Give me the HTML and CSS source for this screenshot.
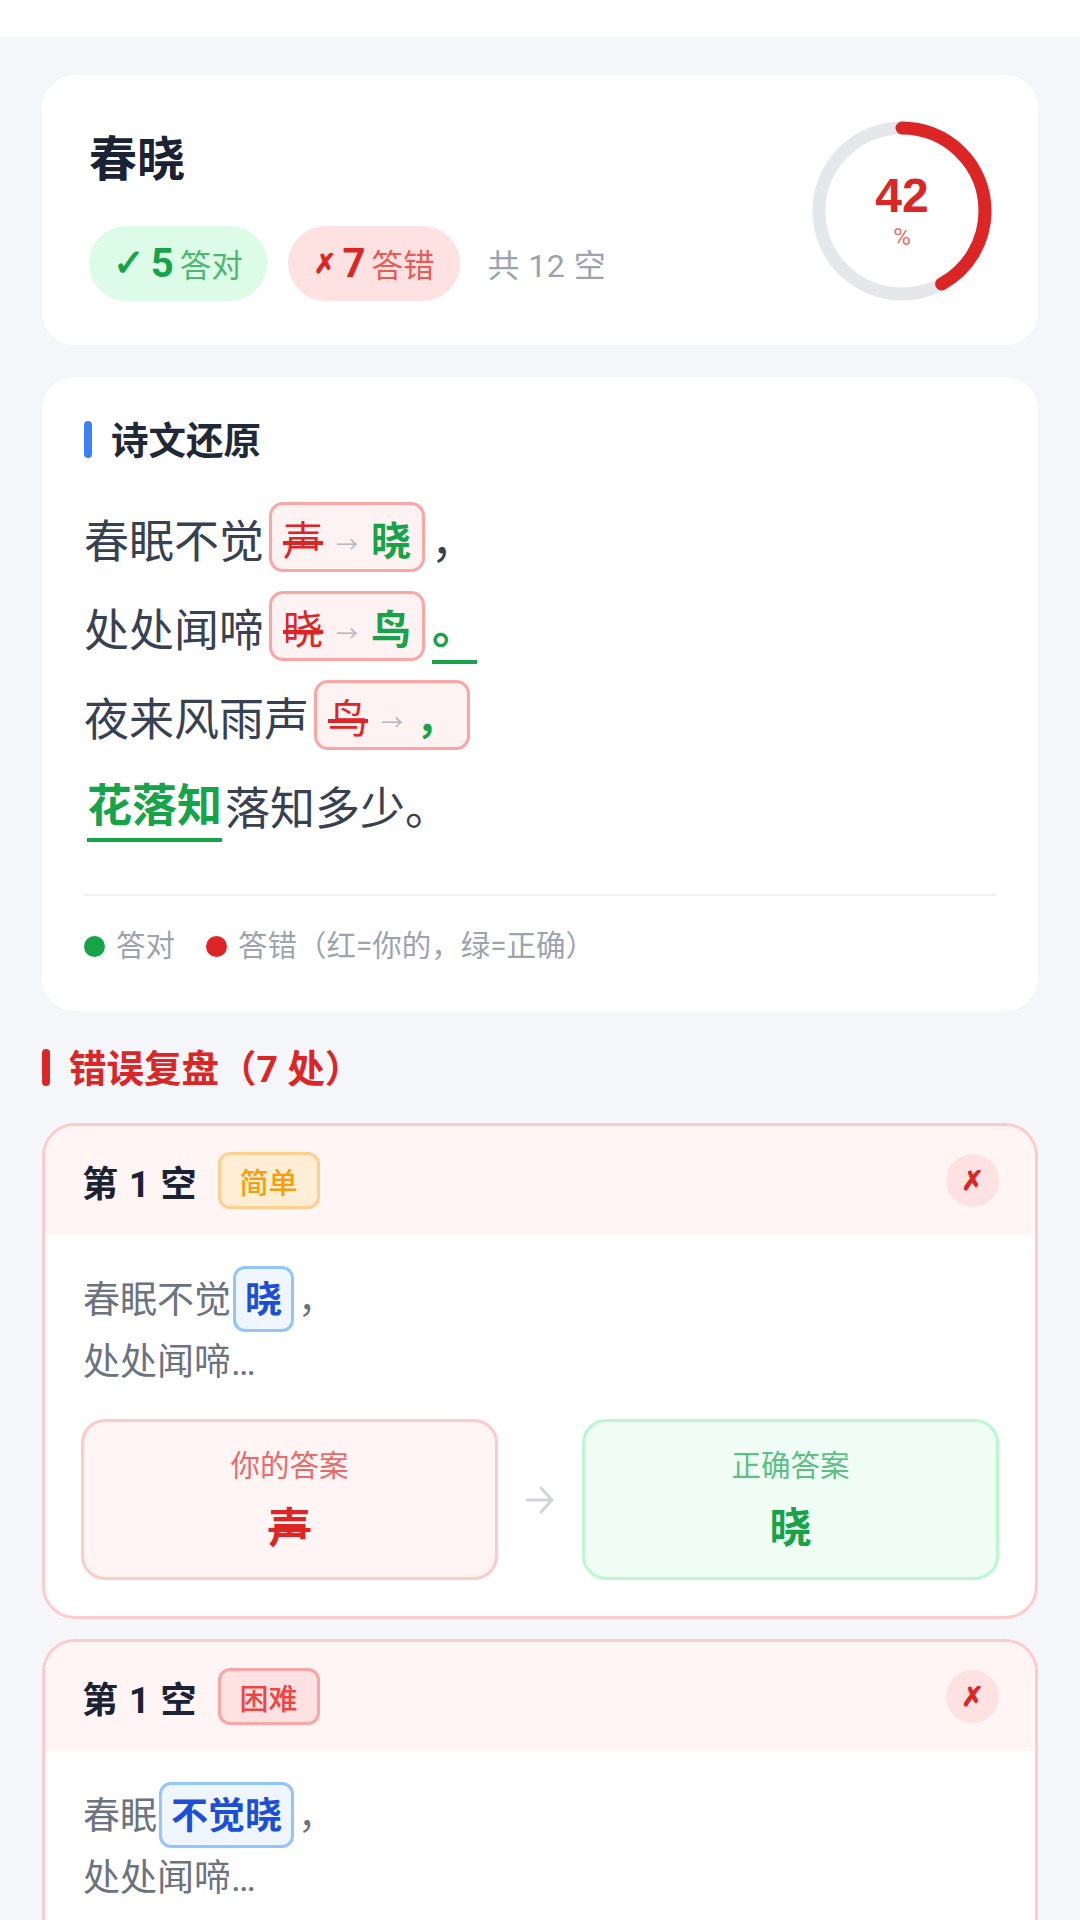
FILE: index.html
```html
<!DOCTYPE html>
<html lang="zh-CN">
<head>
    <meta charset="UTF-8">
    <meta name="viewport" content="width=device-width, initial-scale=1.0">
    <title>春晓</title>
    <link rel="stylesheet" href="styles.css">
</head>
<body>

<div class="topbar"></div>

<div class="page">
    <!-- Score summary -->
    <div class="card summary">
        <div class="summary-left">
            <h1 class="poem-title">春晓</h1>
            <div class="stats">
                <span class="pill pill-ok"><span class="pill-icon">✓</span><b>5</b><span class="pill-label">答对</span></span>
                <span class="pill pill-bad"><span class="pill-icon">✗</span><b>7</b><span class="pill-label">答错</span></span>
                <span class="total">共 12 空</span>
            </div>
        </div>
        <div class="ring">
            <svg width="180" height="180" viewBox="0 0 180 180">
                <circle cx="90" cy="90" r="83" fill="none" stroke="#e5e7eb" stroke-width="13"/>
                <circle cx="90" cy="90" r="83" fill="none" stroke="#dc2626" stroke-width="13" stroke-linecap="round"
                        stroke-dasharray="219 521.5" transform="rotate(-90 90 90)"/>
            </svg>
            <div class="ring-text">
                <span class="ring-num">42</span>
                <span class="ring-unit">%</span>
            </div>
        </div>
    </div>

    <!-- Restored poem -->
    <div class="card poem">
        <div class="section-head"><span class="section-bar"></span><span class="section-text">诗文还原</span></div>
        <div class="poem-lines">
            <div class="poem-line">春眠不觉<span class="fix"><s>声</s><i>→</i><b>晓</b></span>，</div>
            <div class="poem-line">处处闻啼<span class="fix"><s>晓</s><i>→</i><b>鸟</b></span><span class="right punct">。</span></div>
            <div class="poem-line">夜来风雨声<span class="fix"><s>鸟</s><i>→</i><b>，</b></span></div>
            <div class="poem-line"><span class="right">花落知</span>落知多少。</div>
        </div>
        <div class="legend">
            <span class="dot dot-ok"></span><span class="legend-ok">答对</span>
            <span class="dot dot-bad"></span><span>答错（红=你的，绿=正确）</span>
        </div>
    </div>

    <div class="section-head section-err"><span class="section-bar"></span><span class="section-text">错误复盘（7 处）</span></div>

    <!-- Wrong answers -->
    <div class="err-card">
        <div class="err-head">
            <span class="err-no">第 1 空</span>
            <span class="level level-easy">简单</span>
            <span class="err-mark">✗</span>
        </div>
        <div class="err-body">
            <div class="context">
                <div class="context-line">春眠不觉<span class="chip">晓</span>，</div>
                <div class="context-line">处处闻啼…</div>
            </div>
            <div class="answers">
                <div class="answer answer-bad">
                    <span class="answer-label">你的答案</span>
                    <s class="answer-value">声</s>
                </div>
                <svg class="answer-arrow" width="30" height="30" viewBox="0 0 30 30" fill="none" stroke="#d1d5db" stroke-width="3" stroke-linecap="round" stroke-linejoin="round">
                    <path d="M2 15H27M16 3L27 15L16 27"/>
                </svg>
                <div class="answer answer-ok">
                    <span class="answer-label">正确答案</span>
                    <b class="answer-value">晓</b>
                </div>
            </div>
        </div>
    </div>

    <div class="err-card">
        <div class="err-head">
            <span class="err-no">第 1 空</span>
            <span class="level level-hard">困难</span>
            <span class="err-mark">✗</span>
        </div>
        <div class="err-body">
            <div class="context">
                <div class="context-line">春眠<span class="chip">不觉晓</span>，</div>
                <div class="context-line">处处闻啼…</div>
            </div>
        </div>
    </div>
</div>

</body>
</html>
```

FILE: styles.css
```css
html, body {
    margin: 0;
    height: 1920px;
    overflow: hidden;
}
body {
    background-color: #f5f6fa;
    font-family: Roboto, "Noto Sans CJK SC", sans-serif;
    color: #1f2937;
}
.topbar {
    height: 37px;
    background-color: white;
}
.page {
    display: flex;
    flex-direction: column;
    padding: 38px 42px 0;
}
.card {
    background-color: white;
    border-radius: 33px;
}

/* Summary card */
.summary {
    height: 270px;
    display: flex;
    justify-content: space-between;
    align-items: center;
    padding: 0 46px 0 47px;
    box-sizing: border-box;
}
.summary-left {
    padding-top: 10px;
}
.poem-title {
    margin: 0 0 36px;
    font-size: 48px;
    line-height: 60px;
    font-weight: 700;
    color: #1a2233;
}
.stats {
    display: flex;
    align-items: center;
}
.pill {
    display: flex;
    align-items: center;
    height: 75px;
    border-radius: 38px;
    padding: 0 26px;
    font-size: 32px;
}
.pill b {
    font-size: 40px;
    font-weight: 700;
    margin: 0 6px;
}
.pill-label {
    font-size: 31.5px;
}
.pill-icon {
    font-family: "DejaVu Sans", sans-serif;
    font-weight: 700;
    -webkit-text-stroke: 1px currentColor;
}
.pill-ok {
    background-color: #dcfce7;
    color: #16a34a;
    padding: 0 24px;
    margin: 0 21px 0 0;
}
.pill-ok .pill-icon {
    font-size: 38px;
}
.pill-ok .pill-label {
    color: #4ab873;
}
.pill-bad {
    background-color: #fee2e2;
    color: #dc2626;
    margin-right: 27px;
}
.pill-bad .pill-icon {
    font-size: 27px;
}
.pill-bad .pill-label {
    color: #e85a5a;
}
.total {
    font-size: 32px;
    letter-spacing: 0.5px;
    color: #9ca3af;
}
.ring {
    position: relative;
    top: 1px;
    width: 180px;
    height: 180px;
}
.ring svg {
    display: block;
}
.ring-text {
    position: absolute;
    inset: 0;
    padding-top: 4px;
    display: flex;
    flex-direction: column;
    align-items: center;
    justify-content: center;
    color: #dc2626;
}
.ring-num {
    font-family: "Liberation Sans", sans-serif;
    font-size: 48px;
    line-height: 48px;
    font-weight: 700;
}
.ring-unit {
    font-size: 24px;
    line-height: 34px;
    color: #ef6b6b;
}

/* Poem card */
.poem {
    margin-top: 32px;
    height: 634px;
    padding: 44px 42px 0;
    box-sizing: border-box;
}
.section-head {
    display: flex;
    align-items: flex-start;
    font-size: 37.5px;
    line-height: 37px;
    font-weight: 700;
    color: #1f2937;
}
.section-text {
    margin-top: 2px;
}
.section-bar {
    width: 8px;
    height: 37px;
    border-radius: 4px;
    background-color: #3b82f6;
    margin-right: 19px;
}
.poem-lines {
    margin-top: 32px;
}
.poem-line {
    display: flex;
    align-items: center;
    height: 89px;
    box-sizing: border-box;
    padding-top: 4px;
    font-size: 45px;
    color: #374151;
}
.fix {
    display: flex;
    align-items: center;
    height: 70px;
    box-sizing: border-box;
    border: 3px solid #fca5a5;
    border-radius: 14px;
    background-color: #fef2f2;
    padding: 3px 11px 0;
    margin: -4px 6px 0 5px;
    font-size: 40px;
}
.fix s {
    color: #dc2626;
}
.fix i {
    font-style: normal;
    font-size: 22px;
    color: #b4b8c0;
    margin: 8px 13px 0;
}
.fix b {
    color: #16a34a;
    font-weight: 700;
}
.right {
    color: #16a34a;
    font-weight: 700;
    border-bottom: 4px solid #16a34a;
    line-height: 63px;
    margin: 6px 3px 0;
}
.punct {
    margin-left: 1px;
}
.legend {
    margin-top: 46px;
    border-top: 2px solid #eff0f4;
    padding-top: 28px;
    display: flex;
    align-items: center;
    font-size: 29.5px;
    line-height: 44px;
    color: #9ca3af;
}
.dot {
    width: 21px;
    height: 21px;
    border-radius: 50%;
    margin-right: 11px;
}
.dot-ok {
    background-color: #16a34a;
}
.dot-bad {
    background-color: #dc2626;
}
.legend-ok {
    margin-right: 31px;
}

/* Wrong answer cards */
.section-err {
    margin-top: 38px;
    color: #dc2626;
}
.section-err .section-bar {
    background-color: #dc2626;
}
.err-card {
    margin-top: 20px;
    height: 496px;
    box-sizing: border-box;
    border: 3px solid #fecaca;
    border-radius: 33px;
    background-color: white;
    overflow: hidden;
    flex-shrink: 0;
}
.section-err + .err-card {
    margin-top: 35px;
}
.err-head {
    height: 109px;
    display: flex;
    align-items: center;
    background-color: #fff5f5;
    padding: 0 36px 0 37px;
}
.err-no {
    font-size: 36px;
    font-weight: 700;
    color: #1a2233;
    letter-spacing: 1px;
}
.level {
    margin-left: 20px;
    width: 102px;
    height: 57px;
    box-sizing: border-box;
    border-radius: 12px;
    border-width: 3px;
    border-style: solid;
    font-size: 29px;
    font-weight: 500;
    display: flex;
    align-items: center;
    justify-content: center;
}
.level-easy {
    background-color: #ffedd5;
    border-color: #fdd08f;
    color: #f59e0b;
}
.level-hard {
    background-color: #fee2e2;
    border-color: #fca5a5;
    color: #ef4444;
}
.err-mark {
    margin-left: auto;
    width: 53px;
    height: 53px;
    border-radius: 50%;
    background-color: #fee2e2;
    color: #dc2626;
    font-family: "DejaVu Sans", sans-serif;
    font-weight: 700;
    font-size: 27px;
    -webkit-text-stroke: 1px currentColor;
    display: flex;
    align-items: center;
    justify-content: center;
}
.err-body {
    padding: 31px 36px 0;
}
.context {
    padding-left: 2px;
    font-size: 37px;
    color: #6b7280;
}
.context-line {
    display: flex;
    align-items: center;
    height: 62px;
}
.chip {
    display: flex;
    align-items: center;
    height: 66px;
    box-sizing: border-box;
    border: 3px solid #93c5fd;
    border-radius: 12px;
    background-color: #eff6ff;
    color: #1d4ed8;
    font-weight: 700;
    padding: 0 9px 4px;
    margin: 4px 4px 0 2px;
}
.answers {
    display: flex;
    align-items: center;
    justify-content: space-between;
    margin-top: 29px;
}
.answer {
    width: 417px;
    height: 161px;
    box-sizing: border-box;
    border: 3px solid;
    border-radius: 24px;
    display: flex;
    flex-direction: column;
    align-items: center;
    justify-content: center;
}
.answer-label {
    font-size: 29.5px;
    line-height: 40px;
}
.answer-value {
    margin-top: 18px;
    font-size: 42px;
    line-height: 50px;
    font-weight: 700;
    text-decoration-thickness: 4px;
}
.answer-bad {
    background-color: #fff5f5;
    border-color: #fecaca;
    color: #dc2626;
}
.answer-bad .answer-label {
    color: #e86a6a;
}
.answer-ok {
    background-color: #f0fdf4;
    border-color: #bbf7d0;
    color: #16a34a;
}
.answer-ok .answer-label {
    color: #5cc084;
}
```
